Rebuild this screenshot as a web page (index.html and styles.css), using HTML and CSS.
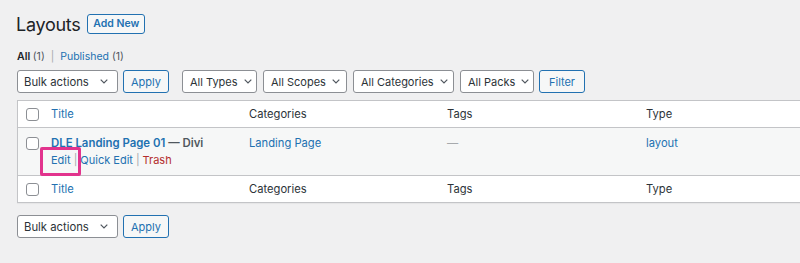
FILE: index.html
```html
<!DOCTYPE html>
<html lang="en">

<head>
  <title>Layouts</title>
  <meta charset="utf-8">
  <link rel="stylesheet" href="styles.css">
</head>

<body>
  <div class="wrap">
    <div class="page-head">
      <h1>Layouts</h1>
      <a class="button add-new" href="#">Add New</a>
    </div>

    <ul class="subsubsub">
      <li><a class="current" href="#">All <span class="count">(1)</span></a><span class="sep">|</span></li>
      <li><a href="#">Published <span class="count">(1)</span></a></li>
    </ul>

    <div class="tablenav">
      <div class="select bulk">
        <span>Bulk actions</span>
        <svg width="8" height="5" viewBox="0 0 8 5"><polyline points="0.7,0.7 4,4 7.3,0.7" /></svg>
      </div>
      <button class="button">Apply</button>
      <div class="filters">
        <div class="select types">
          <span>All Types</span>
          <svg width="8" height="5" viewBox="0 0 8 5"><polyline points="0.7,0.7 4,4 7.3,0.7" /></svg>
        </div>
        <div class="select scopes">
          <span>All Scopes</span>
          <svg width="8" height="5" viewBox="0 0 8 5"><polyline points="0.7,0.7 4,4 7.3,0.7" /></svg>
        </div>
        <div class="select cats">
          <span>All Categories</span>
          <svg width="8" height="5" viewBox="0 0 8 5"><polyline points="0.7,0.7 4,4 7.3,0.7" /></svg>
        </div>
        <div class="select packs">
          <span>All Packs</span>
          <svg width="8" height="5" viewBox="0 0 8 5"><polyline points="0.7,0.7 4,4 7.3,0.7" /></svg>
        </div>
        <button class="button">Filter</button>
      </div>
    </div>

    <table class="list-table">
      <colgroup>
        <col class="col-check">
        <col class="col-title">
        <col class="col-cats">
        <col class="col-tags">
        <col class="col-type">
      </colgroup>
      <thead>
        <tr>
          <td class="check"><span class="checkbox"></span></td>
          <th><a href="#">Title</a></th>
          <th>Categories</th>
          <th>Tags</th>
          <th>Type</th>
        </tr>
      </thead>
      <tbody>
        <tr>
          <td class="check"><span class="checkbox"></span></td>
          <td class="title-cell">
            <strong><a href="#">DLE Landing Page 01</a> — Divi</strong>
            <div class="row-actions">
              <a href="#">Edit</a><span class="sep">|</span><a href="#">Quick Edit</a><span class="sep">|</span><a class="trash" href="#">Trash</a>
            </div>
            <span class="highlight"></span>
          </td>
          <td><a href="#">Landing Page</a></td>
          <td class="none">—</td>
          <td><a href="#">layout</a></td>
        </tr>
      </tbody>
      <tfoot>
        <tr>
          <td class="check"><span class="checkbox"></span></td>
          <th><a href="#">Title</a></th>
          <th>Categories</th>
          <th>Tags</th>
          <th>Type</th>
        </tr>
      </tfoot>
    </table>

    <div class="tablenav bottom">
      <div class="select bulk">
        <span>Bulk actions</span>
        <svg width="8" height="5" viewBox="0 0 8 5"><polyline points="0.7,0.7 4,4 7.3,0.7" /></svg>
      </div>
      <button class="button">Apply</button>
    </div>
  </div>
</body>

</html>
```

FILE: styles.css
```css
* {
  box-sizing: border-box;
}

html,
body {
  overflow: hidden;
}

body {
  margin: 0;
  background-color: #f0f0f1;
  color: #3c434a;
  font-family: Inter, "Liberation Sans", sans-serif;
  font-size: 11.2px;
  line-height: 14px;
}

a {
  color: #2271b1;
  text-decoration: none;
}

.wrap {
  padding: 14px 0 0 17px;
}

.page-head {
  display: flex;
  align-items: center;
  height: 20px;
}

h1 {
  margin: 1px 0 0 -1px;
  font-size: 18px;
  font-weight: 400;
  color: #1d2327;
  letter-spacing: -0.3px;
}

.button {
  display: inline-flex;
  align-items: center;
  justify-content: center;
  height: 23px;
  padding: 0 8px;
  border: 1px solid #2271b1;
  border-radius: 3px;
  background-color: #f6f7f7;
  color: #2271b1;
  font-family: inherit;
  font-size: 11px;
}

.add-new {
  width: 58px;
  height: 20px;
  margin-left: 7px;
  padding: 0;
  font-size: 10.5px;
  font-weight: 600;
}

.subsubsub {
  display: flex;
  margin: 15px 0 0;
  padding: 0;
  list-style: none;
  font-size: 10.5px;
  line-height: 16px;
}

.subsubsub .current {
  color: #1d2327;
  font-weight: 600;
}

.count {
  color: #50575e;
  font-weight: 400;
}

.subsubsub .sep {
  margin: 0 6px;
  color: #a7aaad;
}

.tablenav {
  display: flex;
  align-items: center;
  gap: 5px;
  margin-top: 5px;
}

.tablenav.bottom {
  margin-top: 12px;
}

.filters {
  display: flex;
  gap: 6px;
  margin-left: 8px;
}

.select {
  display: flex;
  align-items: center;
  gap: 6px;
  height: 23px;
  padding: 0 0 0 7px;
  border: 1px solid #8c8f94;
  border-radius: 3px;
  background-color: #ffffff;
  color: #2c3338;
  font-size: 11px;
}

.select svg {
  fill: none;
  stroke: #50575e;
  stroke-width: 1.2;
}

.bulk {
  justify-content: space-between;
  width: 101px;
  padding: 0 9px 0 6px;
  font-size: 11.3px;
}

.types {
  width: 75px;
}

.scopes {
  width: 84px;
}

.cats {
  width: 101px;
}

.packs {
  width: 74px;
}

.filters .button {
  width: 43px;
  margin-left: -1px;
}

.tablenav .button {
  width: 46px;
}

.list-table {
  table-layout: fixed;
  width: 820px;
  margin-top: 7px;
  border: 1px solid #c3c4c7;
  border-right: none;
  border-collapse: separate;
  border-spacing: 0;
  background-color: #ffffff;
  box-shadow: 0 1px 1px rgba(0, 0, 0, 0.04);
}

.col-check {
  width: 25px;
}

.col-title {
  width: 198px;
}

.col-cats {
  width: 198px;
}

.col-tags {
  width: 199px;
}

.list-table th,
.list-table td {
  padding: 6px 8px;
  text-align: left;
  vertical-align: top;
  font-weight: 400;
  color: #2c3338;
}

.list-table thead th,
.list-table thead td {
  border-bottom: 1px solid #c3c4c7;
}

.list-table tfoot th,
.list-table tfoot td {
  border-top: 1px solid #c3c4c7;
}

.list-table th a {
  color: #2271b1;
}

.list-table tbody td {
  padding: 8px 8px 7px;
  background-color: #f6f7f7;
}

.list-table td.check {
  padding-left: 8px;
  padding-right: 0;
}

.checkbox {
  display: block;
  width: 13px;
  height: 13px;
  margin-top: 1px;
  border: 1px solid #8c8f94;
  border-radius: 3px;
  background-color: #ffffff;
}

.title-cell {
  position: relative;
}

.title-cell strong {
  display: block;
  font-size: 11.4px;
  font-weight: 600;
  color: #50575e;
}

.row-actions {
  margin-top: 2px;
  font-size: 11px;
  line-height: 16px;
}

.row-actions .sep {
  margin: 0 3px;
  color: #a7aaad;
}

.row-actions .trash {
  color: #b32d2e;
}

.highlight {
  position: absolute;
  left: -3px;
  top: 19px;
  width: 41px;
  height: 29px;
  border: 3px solid #e2338d;
  border-radius: 2px;
}

.none {
  color: #a7aaad !important;
}
```
